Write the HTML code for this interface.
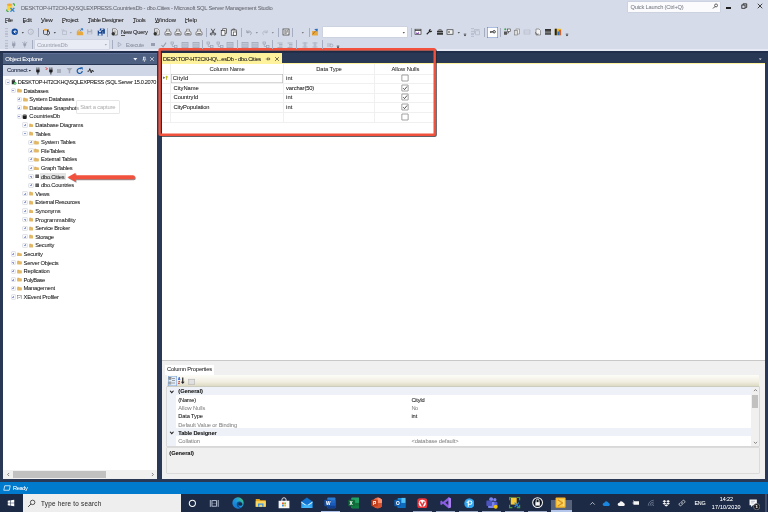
<!DOCTYPE html>
<html lang="en"><head><meta charset="utf-8"><title>SSMS - dbo.Cities</title>
<style>
html,body{margin:0;padding:0}
body{width:768px;height:512px;overflow:hidden;position:relative;background:#d6dbe9;font-family:"Liberation Sans", sans-serif;}
body div,body svg,body span{position:absolute;display:block}
span{white-space:pre;line-height:1;text-shadow:0 0 0.5px color-mix(in srgb, currentColor 30%, transparent);}
#root{left:0;top:0;width:768px;height:512px;will-change:transform}
</style></head>
<body>
<div id="root">
<svg style="left:5.75px;top:2.95px;width:9.5px;height:9.5px;" viewBox="0 0 16 16"><path d="M1.500 3v7.500c0 1.300 2 2 4.500 2s4.500-0.700 4.500-2V3z" fill="#fbd53a"/><ellipse cx="6" cy="3" rx="4.500" ry="2" fill="#f3a93a"/><path d="M11.500 1.200a4 4 0 0 1 3.500 3.800" stroke="#4fae46" stroke-width="2.200" fill="none"/><path d="M1 11a4 4 0 0 0 3.500 3.800" stroke="#4fae46" stroke-width="2.200" fill="none"/><path d="M7.500 8.500l6.500 6M14 8.500l-6.500 6" stroke="#2f86d6" stroke-width="2.200"/></svg>
<span id="t0" style="top:6.00px;font-size:5.8px;color:#6d7079;letter-spacing:-0.270px;left:20.90px;">DESKTOP-HT2CKHQ\SQLEXPRESS.CountriesDb - dbo.Cities - Microsoft SQL Server Management Studio</span>
<div style="left:628.10px;top:1.90px;width:91.50px;height:9.70px;background:#fbfbfd;box-shadow:0 0 0 0.5px #c3c9d8;"></div>
<span id="t1" style="top:5.00px;font-size:5.7px;color:#80848e;letter-spacing:-0.179px;left:630.50px;">Quick Launch (Ctrl+Q)</span>
<svg style="left:711.75px;top:3.45px;width:6.5px;height:6.5px;" viewBox="0 0 16 16"><circle cx="10" cy="6" r="3.6" fill="none" stroke="#333" stroke-width="1.8"/><path d="M7.5 8.5L2.5 13.5" stroke="#333" stroke-width="2.2"/></svg>
<div style="left:726.20px;top:7.20px;width:4.40px;height:1.40px;background:#1e1e1e;"></div>
<svg style="left:741.45px;top:3.05px;width:6.5px;height:6.5px;" viewBox="0 0 16 16"><rect x="2" y="5" width="8" height="8" fill="none" stroke="#1e1e1e" stroke-width="2"/><path d="M5 5V2h9v9h-3" fill="none" stroke="#1e1e1e" stroke-width="2"/></svg>
<svg style="left:757.30px;top:3.30px;width:6px;height:6px;" viewBox="0 0 16 16"><path d="M2 2l12 12M14 2L2 14" stroke="#1e1e1e" stroke-width="2.2"/></svg>
<span id="t2" style="top:18.00px;font-size:5.9px;color:#262626;letter-spacing:-0.475px;left:5.00px;">File</span>
<div style="left:5.20px;top:22.25px;width:2.30px;height:0.50px;background:#555;"></div>
<span id="t3" style="top:18.00px;font-size:5.9px;color:#262626;letter-spacing:-0.289px;left:22.50px;">Edit</span>
<div style="left:22.70px;top:22.25px;width:2.30px;height:0.50px;background:#555;"></div>
<span id="t4" style="top:18.00px;font-size:5.9px;color:#262626;letter-spacing:-0.293px;left:41.00px;">View</span>
<div style="left:41.20px;top:22.25px;width:2.30px;height:0.50px;background:#555;"></div>
<span id="t5" style="top:18.00px;font-size:5.9px;color:#262626;letter-spacing:-0.263px;left:62.00px;">Project</span>
<div style="left:62.20px;top:22.25px;width:2.30px;height:0.50px;background:#555;"></div>
<span id="t6" style="top:18.00px;font-size:5.9px;color:#262626;letter-spacing:-0.271px;left:88.00px;">Table Designer</span>
<div style="left:88.20px;top:22.25px;width:2.30px;height:0.50px;background:#555;"></div>
<span id="t7" style="top:18.00px;font-size:5.9px;color:#262626;letter-spacing:-0.253px;left:133.00px;">Tools</span>
<div style="left:133.20px;top:22.25px;width:2.30px;height:0.50px;background:#555;"></div>
<span id="t8" style="top:18.00px;font-size:5.9px;color:#262626;letter-spacing:0.008px;left:155.00px;">Window</span>
<div style="left:155.20px;top:22.25px;width:4.20px;height:0.50px;background:#555;"></div>
<span id="t9" style="top:18.00px;font-size:5.9px;color:#262626;letter-spacing:-0.031px;left:185.00px;">Help</span>
<div style="left:185.20px;top:22.25px;width:2.30px;height:0.50px;background:#555;"></div>
<div style="left:0.00px;top:48.60px;width:768.00px;height:2.20px;background:#e6e9f4;"></div>
<div style="left:0.00px;top:50.70px;width:768.00px;height:432.00px;background:#293955;"></div>
<div style="left:0.00px;top:50.70px;width:768.00px;height:2.20px;background:#222f4c;"></div>
<div style="left:3.30px;top:52.90px;width:154.10px;height:11.60px;background:#4d6082;"></div>
<div style="left:3.30px;top:52.90px;width:154.10px;height:1.30px;background:#5f7098;"></div>
<div style="left:3.30px;top:64.50px;width:154.10px;height:11.50px;background:#cfd6e5;"></div>
<div style="left:3.30px;top:76.00px;width:154.10px;height:403.00px;background:#ffffff;"></div>
<div style="left:161.70px;top:62.80px;width:603.40px;height:1.40px;background:#fff29d;"></div>
<div style="left:161.70px;top:64.20px;width:603.40px;height:296.00px;background:#ffffff;"></div>
<div style="left:161.70px;top:360.20px;width:603.40px;height:118.80px;background:#f0f0f0;"></div>
<div style="left:161.70px;top:360.00px;width:603.40px;height:0.60px;background:#c8c8c8;"></div>
<div style="left:161.70px;top:53.10px;width:120.30px;height:10.00px;background:#fff29d;"></div>
<div style="left:0.00px;top:481.80px;width:768.00px;height:12.20px;background:#007acc;"></div>
<div style="left:0.00px;top:493.80px;width:768.00px;height:18.20px;background:#1c2a45;"></div>
<span id="t10" style="top:57.00px;font-size:5.9px;color:#ffffff;letter-spacing:-0.221px;left:5.20px;">Object Explorer</span>
<svg style="left:132.00px;top:56.00px;width:6.6px;height:6.6px;" viewBox="0 0 16 16"><path d="M3 5h10L8 11z" fill="#eef1f8"/></svg>
<svg style="left:140.55px;top:55.95px;width:6.5px;height:6.5px;" viewBox="0 0 16 16"><path d="M5 2h6v7h2v1.5H8.8V15H7.2v-4.5H3V9h2z M7 3.5v5.5h2V3.5z" fill="#e8ecf5" fill-rule="evenodd"/></svg>
<svg style="left:149.00px;top:56.30px;width:6px;height:6px;" viewBox="0 0 16 16"><path d="M3 3l10 10M13 3L3 13" stroke="#e8ecf5" stroke-width="1.8"/></svg>
<span id="t11" style="top:68.00px;font-size:5.9px;color:#1e2a44;letter-spacing:-0.208px;left:7.00px;">Connect</span>
<svg style="left:27.70px;top:69.00px;width:3.6px;height:3.6px;" viewBox="0 0 16 16"><path d="M3 5h10L8 11z" fill="#1e1e1e"/></svg>
<svg style="left:34.40px;top:67.00px;width:7.8px;height:7.8px;" viewBox="0 0 16 16"><path d="M6 1v4.500M10 1v4.500" stroke="#1e1e1e" stroke-width="1.500"/><path d="M4.500 5h7v4c0 1.500-1.300 2.300-2.600 2.500V15.500H7.100v-4C5.800 11.300 4.500 10.500 4.500 9z" fill="#1e1e1e"/></svg>
<svg style="left:46.70px;top:67.00px;width:7.8px;height:7.8px;" viewBox="0 0 16 16"><path d="M6 1v4.500M10 1v4.500" stroke="#1e1e1e" stroke-width="1.500"/><path d="M4.500 5h7v4c0 1.500-1.300 2.300-2.600 2.500V15.500H7.100v-4C5.800 11.300 4.500 10.500 4.500 9z" fill="#1e1e1e"/></svg>
<svg style="left:44.60px;top:66.90px;width:3.4px;height:3.4px;" viewBox="0 0 16 16"><path d="M2 2l10 6-10 6" fill="none" stroke="#d8261c" stroke-width="3.200"/></svg>
<div style="left:57.40px;top:68.90px;width:3.70px;height:3.70px;background:#a9aebb;"></div>
<svg style="left:66.20px;top:67.40px;width:7px;height:7px;" viewBox="0 0 16 16"><path d="M1.500 2h13L9.600 8.500V14H6.400V8.500z" fill="#a4a9b6"/></svg>
<svg style="left:76.30px;top:67.20px;width:7.4px;height:7.4px;" viewBox="0 0 16 16"><path d="M13.500 8.500a5.500 5.500 0 1 1-2.500-4.600" fill="none" stroke="#1559a8" stroke-width="2.600"/><path d="M8.500 0.500h6v6z" fill="#1559a8"/></svg>
<svg style="left:86.95px;top:66.95px;width:7.5px;height:7.5px;" viewBox="0 0 16 16"><path d="M1 9h3l2-5.500 3 9 2-6 1 2.500h3" fill="none" stroke="#1e1e1e" stroke-width="1.900"/></svg>
<div style="left:5.95px;top:80.35px;width:3.30px;height:3.30px;background:#f7f8fb;box-shadow:0 0 0 0.45px #c3c5cd;"></div>
<div style="left:6.55px;top:81.75px;width:2.10px;height:0.50px;background:#93a0cf;"></div>
<svg style="left:10.50px;top:79.00px;width:6px;height:6px;" viewBox="0 0 16 16"><rect x="2" y="3" width="9" height="11" fill="#333"/><rect x="4" y="1" width="6" height="4" fill="#666"/><circle cx="11" cy="11.500" r="3.600" fill="#36b04a"/><path d="M9.800 10l3 1.500-3 1.500z" fill="#fff"/></svg>
<span id="t12" style="top:80.00px;font-size:5.6px;color:#262626;letter-spacing:-0.312px;left:17.70px;width:139.8px;overflow:hidden;">DESKTOP-HT2CKHQ\SQLEXPRESS (SQL Server 15.0.2070</span>
<div style="left:11.78px;top:88.95px;width:3.30px;height:3.30px;background:#f7f8fb;box-shadow:0 0 0 0.45px #c3c5cd;"></div>
<div style="left:12.38px;top:90.35px;width:2.10px;height:0.50px;background:#93a0cf;"></div>
<svg style="left:16.88px;top:88.15px;width:4.9px;height:4.9px;" viewBox="0 0 16 16"><path d="M1 2.500h6l1.500 2H15v9.500H1z" fill="#dcad58"/><path d="M1 5.500h14v8.500H1z" fill="#e2b765"/></svg>
<span id="t13" style="top:89.00px;font-size:5.8px;color:#262626;letter-spacing:-0.324px;left:23.53px;">Databases</span>
<div style="left:17.61px;top:97.55px;width:3.30px;height:3.30px;background:#f7f8fb;box-shadow:0 0 0 0.45px #c3c5cd;"></div>
<div style="left:18.21px;top:98.95px;width:2.10px;height:0.50px;background:#93a0cf;"></div>
<div style="left:19.01px;top:98.15px;width:0.50px;height:2.10px;background:#93a0cf;"></div>
<svg style="left:22.71px;top:96.75px;width:4.9px;height:4.9px;" viewBox="0 0 16 16"><path d="M1 2.500h6l1.500 2H15v9.500H1z" fill="#dcad58"/><path d="M1 5.500h14v8.500H1z" fill="#e2b765"/></svg>
<span id="t14" style="top:97.00px;font-size:5.8px;color:#262626;letter-spacing:-0.244px;left:29.36px;">System Databases</span>
<div style="left:17.61px;top:106.15px;width:3.30px;height:3.30px;background:#f7f8fb;box-shadow:0 0 0 0.45px #c3c5cd;"></div>
<div style="left:18.21px;top:107.55px;width:2.10px;height:0.50px;background:#93a0cf;"></div>
<div style="left:19.01px;top:106.75px;width:0.50px;height:2.10px;background:#93a0cf;"></div>
<svg style="left:22.71px;top:105.35px;width:4.9px;height:4.9px;" viewBox="0 0 16 16"><path d="M1 2.500h6l1.500 2H15v9.500H1z" fill="#dcad58"/><path d="M1 5.500h14v8.500H1z" fill="#e2b765"/></svg>
<span id="t15" style="top:106.00px;font-size:5.8px;color:#262626;letter-spacing:-0.240px;left:29.36px;">Database Snapshots</span>
<div style="left:17.61px;top:114.75px;width:3.30px;height:3.30px;background:#f7f8fb;box-shadow:0 0 0 0.45px #c3c5cd;"></div>
<div style="left:18.21px;top:116.15px;width:2.10px;height:0.50px;background:#93a0cf;"></div>
<svg style="left:22.46px;top:113.70px;width:5.4px;height:5.4px;" viewBox="0 0 16 16"><path d="M2 3.500v9c0 1.500 2.500 2.500 6 2.500s6-1 6-2.500v-9z" fill="#1e1e1e"/><ellipse cx="8" cy="3.500" rx="6" ry="2.400" fill="#6a6a6a"/></svg>
<span id="t16" style="top:114.00px;font-size:5.8px;color:#262626;letter-spacing:-0.130px;left:29.36px;">CountriesDb</span>
<div style="left:23.44px;top:123.35px;width:3.30px;height:3.30px;background:#f7f8fb;box-shadow:0 0 0 0.45px #c3c5cd;"></div>
<div style="left:24.04px;top:124.75px;width:2.10px;height:0.50px;background:#93a0cf;"></div>
<div style="left:24.84px;top:123.95px;width:0.50px;height:2.10px;background:#93a0cf;"></div>
<svg style="left:28.54px;top:122.55px;width:4.9px;height:4.9px;" viewBox="0 0 16 16"><path d="M1 2.500h6l1.500 2H15v9.500H1z" fill="#dcad58"/><path d="M1 5.500h14v8.500H1z" fill="#e2b765"/></svg>
<span id="t17" style="top:123.00px;font-size:5.8px;color:#262626;letter-spacing:-0.196px;left:35.19px;">Database Diagrams</span>
<div style="left:23.44px;top:131.95px;width:3.30px;height:3.30px;background:#f7f8fb;box-shadow:0 0 0 0.45px #c3c5cd;"></div>
<div style="left:24.04px;top:133.35px;width:2.10px;height:0.50px;background:#93a0cf;"></div>
<svg style="left:28.54px;top:131.15px;width:4.9px;height:4.9px;" viewBox="0 0 16 16"><path d="M1 2.500h6l1.500 2H15v9.500H1z" fill="#dcad58"/><path d="M1 5.500h14v8.500H1z" fill="#e2b765"/></svg>
<span id="t18" style="top:132.00px;font-size:5.8px;color:#262626;letter-spacing:-0.240px;left:35.19px;">Tables</span>
<div style="left:29.27px;top:140.55px;width:3.30px;height:3.30px;background:#f7f8fb;box-shadow:0 0 0 0.45px #c3c5cd;"></div>
<div style="left:29.87px;top:141.95px;width:2.10px;height:0.50px;background:#93a0cf;"></div>
<div style="left:30.67px;top:141.15px;width:0.50px;height:2.10px;background:#93a0cf;"></div>
<svg style="left:34.37px;top:139.75px;width:4.9px;height:4.9px;" viewBox="0 0 16 16"><path d="M1 2.500h6l1.500 2H15v9.500H1z" fill="#dcad58"/><path d="M1 5.500h14v8.500H1z" fill="#e2b765"/></svg>
<span id="t19" style="top:140.00px;font-size:5.8px;color:#262626;letter-spacing:-0.240px;left:41.02px;">System Tables</span>
<div style="left:29.27px;top:149.15px;width:3.30px;height:3.30px;background:#f7f8fb;box-shadow:0 0 0 0.45px #c3c5cd;"></div>
<div style="left:29.87px;top:150.55px;width:2.10px;height:0.50px;background:#93a0cf;"></div>
<div style="left:30.67px;top:149.75px;width:0.50px;height:2.10px;background:#93a0cf;"></div>
<svg style="left:34.37px;top:148.35px;width:4.9px;height:4.9px;" viewBox="0 0 16 16"><path d="M1 2.500h6l1.500 2H15v9.500H1z" fill="#dcad58"/><path d="M1 5.500h14v8.500H1z" fill="#e2b765"/></svg>
<span id="t20" style="top:149.00px;font-size:5.8px;color:#262626;letter-spacing:-0.240px;left:41.02px;">FileTables</span>
<div style="left:29.27px;top:157.75px;width:3.30px;height:3.30px;background:#f7f8fb;box-shadow:0 0 0 0.45px #c3c5cd;"></div>
<div style="left:29.87px;top:159.15px;width:2.10px;height:0.50px;background:#93a0cf;"></div>
<div style="left:30.67px;top:158.35px;width:0.50px;height:2.10px;background:#93a0cf;"></div>
<svg style="left:34.37px;top:156.95px;width:4.9px;height:4.9px;" viewBox="0 0 16 16"><path d="M1 2.500h6l1.500 2H15v9.500H1z" fill="#dcad58"/><path d="M1 5.500h14v8.500H1z" fill="#e2b765"/></svg>
<span id="t21" style="top:157.00px;font-size:5.8px;color:#262626;letter-spacing:-0.240px;left:41.02px;">External Tables</span>
<div style="left:29.27px;top:166.35px;width:3.30px;height:3.30px;background:#f7f8fb;box-shadow:0 0 0 0.45px #c3c5cd;"></div>
<div style="left:29.87px;top:167.75px;width:2.10px;height:0.50px;background:#93a0cf;"></div>
<div style="left:30.67px;top:166.95px;width:0.50px;height:2.10px;background:#93a0cf;"></div>
<svg style="left:34.37px;top:165.55px;width:4.9px;height:4.9px;" viewBox="0 0 16 16"><path d="M1 2.500h6l1.500 2H15v9.500H1z" fill="#dcad58"/><path d="M1 5.500h14v8.500H1z" fill="#e2b765"/></svg>
<span id="t22" style="top:166.00px;font-size:5.8px;color:#262626;letter-spacing:-0.240px;left:41.02px;">Graph Tables</span>
<div style="left:40.22px;top:173.20px;width:25.40px;height:6.90px;background:#e4e4e4;"></div>
<div style="left:29.27px;top:174.95px;width:3.30px;height:3.30px;background:#f7f8fb;box-shadow:0 0 0 0.45px #c3c5cd;"></div>
<div style="left:29.87px;top:176.35px;width:2.10px;height:0.50px;background:#93a0cf;"></div>
<div style="left:30.67px;top:175.55px;width:0.50px;height:2.10px;background:#93a0cf;"></div>
<svg style="left:35.22px;top:174.30px;width:4.4px;height:4.4px;" viewBox="0 0 16 16"><rect x="1.500" y="2" width="13" height="12.500" fill="#3c3c3c"/><path d="M1.500 6.300h13M1.500 10.300h13" stroke="#d0d0d0" stroke-width="1.100"/><path d="M6 6v8.500M10.500 6v8.500" stroke="#999" stroke-width="0.700"/></svg>
<span id="t23" style="top:175.00px;font-size:5.8px;color:#262626;letter-spacing:-0.240px;left:41.02px;">dbo.Cities</span>
<div style="left:29.27px;top:183.55px;width:3.30px;height:3.30px;background:#f7f8fb;box-shadow:0 0 0 0.45px #c3c5cd;"></div>
<div style="left:29.87px;top:184.95px;width:2.10px;height:0.50px;background:#93a0cf;"></div>
<div style="left:30.67px;top:184.15px;width:0.50px;height:2.10px;background:#93a0cf;"></div>
<svg style="left:35.22px;top:182.90px;width:4.4px;height:4.4px;" viewBox="0 0 16 16"><rect x="1.500" y="2" width="13" height="12.500" fill="#3c3c3c"/><path d="M1.500 6.300h13M1.500 10.300h13" stroke="#d0d0d0" stroke-width="1.100"/><path d="M6 6v8.500M10.500 6v8.500" stroke="#999" stroke-width="0.700"/></svg>
<span id="t24" style="top:183.00px;font-size:5.8px;color:#262626;letter-spacing:-0.240px;left:41.02px;">dbo.Countries</span>
<div style="left:23.44px;top:192.15px;width:3.30px;height:3.30px;background:#f7f8fb;box-shadow:0 0 0 0.45px #c3c5cd;"></div>
<div style="left:24.04px;top:193.55px;width:2.10px;height:0.50px;background:#93a0cf;"></div>
<div style="left:24.84px;top:192.75px;width:0.50px;height:2.10px;background:#93a0cf;"></div>
<svg style="left:28.54px;top:191.35px;width:4.9px;height:4.9px;" viewBox="0 0 16 16"><path d="M1 2.500h6l1.500 2H15v9.500H1z" fill="#dcad58"/><path d="M1 5.500h14v8.500H1z" fill="#e2b765"/></svg>
<span id="t25" style="top:192.00px;font-size:5.8px;color:#262626;letter-spacing:-0.240px;left:35.19px;">Views</span>
<div style="left:23.44px;top:200.75px;width:3.30px;height:3.30px;background:#f7f8fb;box-shadow:0 0 0 0.45px #c3c5cd;"></div>
<div style="left:24.04px;top:202.15px;width:2.10px;height:0.50px;background:#93a0cf;"></div>
<div style="left:24.84px;top:201.35px;width:0.50px;height:2.10px;background:#93a0cf;"></div>
<svg style="left:28.54px;top:199.95px;width:4.9px;height:4.9px;" viewBox="0 0 16 16"><path d="M1 2.500h6l1.500 2H15v9.500H1z" fill="#dcad58"/><path d="M1 5.500h14v8.500H1z" fill="#e2b765"/></svg>
<span id="t26" style="top:200.00px;font-size:5.8px;color:#262626;letter-spacing:-0.333px;left:35.19px;">External Resources</span>
<div style="left:23.44px;top:209.35px;width:3.30px;height:3.30px;background:#f7f8fb;box-shadow:0 0 0 0.45px #c3c5cd;"></div>
<div style="left:24.04px;top:210.75px;width:2.10px;height:0.50px;background:#93a0cf;"></div>
<div style="left:24.84px;top:209.95px;width:0.50px;height:2.10px;background:#93a0cf;"></div>
<svg style="left:28.54px;top:208.55px;width:4.9px;height:4.9px;" viewBox="0 0 16 16"><path d="M1 2.500h6l1.500 2H15v9.500H1z" fill="#dcad58"/><path d="M1 5.500h14v8.500H1z" fill="#e2b765"/></svg>
<span id="t27" style="top:209.00px;font-size:5.8px;color:#262626;letter-spacing:-0.240px;left:35.19px;">Synonyms</span>
<div style="left:23.44px;top:217.95px;width:3.30px;height:3.30px;background:#f7f8fb;box-shadow:0 0 0 0.45px #c3c5cd;"></div>
<div style="left:24.04px;top:219.35px;width:2.10px;height:0.50px;background:#93a0cf;"></div>
<div style="left:24.84px;top:218.55px;width:0.50px;height:2.10px;background:#93a0cf;"></div>
<svg style="left:28.54px;top:217.15px;width:4.9px;height:4.9px;" viewBox="0 0 16 16"><path d="M1 2.500h6l1.500 2H15v9.500H1z" fill="#dcad58"/><path d="M1 5.500h14v8.500H1z" fill="#e2b765"/></svg>
<span id="t28" style="top:218.00px;font-size:5.8px;color:#262626;letter-spacing:-0.093px;left:35.19px;">Programmability</span>
<div style="left:23.44px;top:226.55px;width:3.30px;height:3.30px;background:#f7f8fb;box-shadow:0 0 0 0.45px #c3c5cd;"></div>
<div style="left:24.04px;top:227.95px;width:2.10px;height:0.50px;background:#93a0cf;"></div>
<div style="left:24.84px;top:227.15px;width:0.50px;height:2.10px;background:#93a0cf;"></div>
<svg style="left:28.54px;top:225.75px;width:4.9px;height:4.9px;" viewBox="0 0 16 16"><path d="M1 2.500h6l1.500 2H15v9.500H1z" fill="#dcad58"/><path d="M1 5.500h14v8.500H1z" fill="#e2b765"/></svg>
<span id="t29" style="top:226.00px;font-size:5.8px;color:#262626;letter-spacing:-0.240px;left:35.19px;">Service Broker</span>
<div style="left:23.44px;top:235.15px;width:3.30px;height:3.30px;background:#f7f8fb;box-shadow:0 0 0 0.45px #c3c5cd;"></div>
<div style="left:24.04px;top:236.55px;width:2.10px;height:0.50px;background:#93a0cf;"></div>
<div style="left:24.84px;top:235.75px;width:0.50px;height:2.10px;background:#93a0cf;"></div>
<svg style="left:28.54px;top:234.35px;width:4.9px;height:4.9px;" viewBox="0 0 16 16"><path d="M1 2.500h6l1.500 2H15v9.500H1z" fill="#dcad58"/><path d="M1 5.500h14v8.500H1z" fill="#e2b765"/></svg>
<span id="t30" style="top:235.00px;font-size:5.8px;color:#262626;letter-spacing:-0.240px;left:35.19px;">Storage</span>
<div style="left:23.44px;top:243.75px;width:3.30px;height:3.30px;background:#f7f8fb;box-shadow:0 0 0 0.45px #c3c5cd;"></div>
<div style="left:24.04px;top:245.15px;width:2.10px;height:0.50px;background:#93a0cf;"></div>
<div style="left:24.84px;top:244.35px;width:0.50px;height:2.10px;background:#93a0cf;"></div>
<svg style="left:28.54px;top:242.95px;width:4.9px;height:4.9px;" viewBox="0 0 16 16"><path d="M1 2.500h6l1.500 2H15v9.500H1z" fill="#dcad58"/><path d="M1 5.500h14v8.500H1z" fill="#e2b765"/></svg>
<span id="t31" style="top:243.00px;font-size:5.8px;color:#262626;letter-spacing:-0.240px;left:35.19px;">Security</span>
<div style="left:11.78px;top:252.35px;width:3.30px;height:3.30px;background:#f7f8fb;box-shadow:0 0 0 0.45px #c3c5cd;"></div>
<div style="left:12.38px;top:253.75px;width:2.10px;height:0.50px;background:#93a0cf;"></div>
<div style="left:13.18px;top:252.95px;width:0.50px;height:2.10px;background:#93a0cf;"></div>
<svg style="left:16.88px;top:251.55px;width:4.9px;height:4.9px;" viewBox="0 0 16 16"><path d="M1 2.500h6l1.500 2H15v9.500H1z" fill="#dcad58"/><path d="M1 5.500h14v8.500H1z" fill="#e2b765"/></svg>
<span id="t32" style="top:252.00px;font-size:5.8px;color:#262626;letter-spacing:-0.240px;left:23.53px;">Security</span>
<div style="left:11.78px;top:260.95px;width:3.30px;height:3.30px;background:#f7f8fb;box-shadow:0 0 0 0.45px #c3c5cd;"></div>
<div style="left:12.38px;top:262.35px;width:2.10px;height:0.50px;background:#93a0cf;"></div>
<div style="left:13.18px;top:261.55px;width:0.50px;height:2.10px;background:#93a0cf;"></div>
<svg style="left:16.88px;top:260.15px;width:4.9px;height:4.9px;" viewBox="0 0 16 16"><path d="M1 2.500h6l1.500 2H15v9.500H1z" fill="#dcad58"/><path d="M1 5.500h14v8.500H1z" fill="#e2b765"/></svg>
<span id="t33" style="top:261.00px;font-size:5.8px;color:#262626;letter-spacing:-0.240px;left:23.53px;">Server Objects</span>
<div style="left:11.78px;top:269.55px;width:3.30px;height:3.30px;background:#f7f8fb;box-shadow:0 0 0 0.45px #c3c5cd;"></div>
<div style="left:12.38px;top:270.95px;width:2.10px;height:0.50px;background:#93a0cf;"></div>
<div style="left:13.18px;top:270.15px;width:0.50px;height:2.10px;background:#93a0cf;"></div>
<svg style="left:16.88px;top:268.75px;width:4.9px;height:4.9px;" viewBox="0 0 16 16"><path d="M1 2.500h6l1.500 2H15v9.500H1z" fill="#dcad58"/><path d="M1 5.500h14v8.500H1z" fill="#e2b765"/></svg>
<span id="t34" style="top:269.00px;font-size:5.8px;color:#262626;letter-spacing:-0.240px;left:23.53px;">Replication</span>
<div style="left:11.78px;top:278.15px;width:3.30px;height:3.30px;background:#f7f8fb;box-shadow:0 0 0 0.45px #c3c5cd;"></div>
<div style="left:12.38px;top:279.55px;width:2.10px;height:0.50px;background:#93a0cf;"></div>
<div style="left:13.18px;top:278.75px;width:0.50px;height:2.10px;background:#93a0cf;"></div>
<svg style="left:16.88px;top:277.35px;width:4.9px;height:4.9px;" viewBox="0 0 16 16"><path d="M1 2.500h6l1.500 2H15v9.500H1z" fill="#dcad58"/><path d="M1 5.500h14v8.500H1z" fill="#e2b765"/></svg>
<span id="t35" style="top:278.00px;font-size:5.8px;color:#262626;letter-spacing:-0.388px;left:23.53px;">PolyBase</span>
<div style="left:11.78px;top:286.75px;width:3.30px;height:3.30px;background:#f7f8fb;box-shadow:0 0 0 0.45px #c3c5cd;"></div>
<div style="left:12.38px;top:288.15px;width:2.10px;height:0.50px;background:#93a0cf;"></div>
<div style="left:13.18px;top:287.35px;width:0.50px;height:2.10px;background:#93a0cf;"></div>
<svg style="left:16.88px;top:285.95px;width:4.9px;height:4.9px;" viewBox="0 0 16 16"><path d="M1 2.500h6l1.500 2H15v9.500H1z" fill="#dcad58"/><path d="M1 5.500h14v8.500H1z" fill="#e2b765"/></svg>
<span id="t36" style="top:286.00px;font-size:5.8px;color:#262626;letter-spacing:-0.240px;left:23.53px;">Management</span>
<div style="left:11.78px;top:295.35px;width:3.30px;height:3.30px;background:#f7f8fb;box-shadow:0 0 0 0.45px #c3c5cd;"></div>
<div style="left:12.38px;top:296.75px;width:2.10px;height:0.50px;background:#93a0cf;"></div>
<div style="left:13.18px;top:295.95px;width:0.50px;height:2.10px;background:#93a0cf;"></div>
<svg style="left:16.93px;top:294.60px;width:4.8px;height:4.8px;" viewBox="0 0 16 16"><rect x="2" y="2" width="12" height="12" fill="#fff" stroke="#555" stroke-width="1.4"/><path d="M4 11l3-4 2 2 3-4" stroke="#444" stroke-width="1.3" fill="none"/></svg>
<span id="t37" style="top:295.00px;font-size:5.8px;color:#262626;letter-spacing:-0.240px;left:23.53px;">XEvent Profiler</span>
<div style="left:77.00px;top:101.00px;width:41.70px;height:11.50px;background:rgba(255,255,255,0.6);box-shadow:0 0 0 0.5px #cdcdcd;"></div>
<span id="t38" style="top:105.00px;font-size:5.8px;color:#b5b5b5;letter-spacing:-0.202px;left:80.20px;">Start a capture</span>
<div style="left:3.30px;top:470.30px;width:154.10px;height:8.70px;background:#f0f0f0;"></div>
<div style="left:12.50px;top:471.30px;width:93.50px;height:6.60px;background:#c1c1c1;"></div>
<svg style="left:5.50px;top:472.00px;width:5px;height:5px;" viewBox="0 0 16 16"><path d="M10 3L5 8l5 5" fill="none" stroke="#444" stroke-width="2"/></svg>
<svg style="left:150.00px;top:472.00px;width:5px;height:5px;" viewBox="0 0 16 16"><path d="M6 3l5 5-5 5" fill="none" stroke="#444" stroke-width="2"/></svg>
<span id="t39" style="top:57.00px;font-size:5.8px;color:#1e1e1e;letter-spacing:-0.282px;left:163.00px;">DESKTOP-HT2CKHQ\...esDb - dbo.Cities</span>
<svg style="left:264.50px;top:55.80px;width:6px;height:6px;" viewBox="0 0 16 16"><path d="M2 8h5M7 4.500v7M7 5.500h5v4.500H7M12 8h2" fill="none" stroke="#333" stroke-width="1.5"/></svg>
<svg style="left:273.70px;top:55.70px;width:6px;height:6px;" viewBox="0 0 16 16"><path d="M3 3l10 10M13 3L3 13" stroke="#222" stroke-width="1.7"/></svg>
<svg style="left:757.55px;top:57.05px;width:4.5px;height:4.5px;" viewBox="0 0 16 16"><path d="M3 5h10L8 11z" fill="#dfe4ee"/></svg>
<div style="left:161.70px;top:73.50px;width:272.30px;height:0.60px;background:#f0f0f0;"></div>
<div style="left:161.70px;top:83.10px;width:272.30px;height:0.60px;background:#f0f0f0;"></div>
<div style="left:161.70px;top:92.70px;width:272.30px;height:0.60px;background:#f0f0f0;"></div>
<div style="left:161.70px;top:102.30px;width:272.30px;height:0.60px;background:#f0f0f0;"></div>
<div style="left:161.70px;top:111.90px;width:272.30px;height:0.60px;background:#f0f0f0;"></div>
<div style="left:161.70px;top:121.50px;width:272.30px;height:0.60px;background:#f0f0f0;"></div>
<div style="left:170.30px;top:64.20px;width:0.60px;height:57.60px;background:#f0f0f0;"></div>
<div style="left:283.20px;top:64.20px;width:0.60px;height:57.60px;background:#f0f0f0;"></div>
<div style="left:374.20px;top:64.20px;width:0.60px;height:57.60px;background:#f0f0f0;"></div>
<div style="left:433.70px;top:64.20px;width:0.60px;height:57.60px;background:#f0f0f0;"></div>
<span id="t40" style="top:67.00px;font-size:5.8px;color:#333;letter-spacing:-0.188px;left:127.05px;width:200px;text-align:center;">Column Name</span>
<span id="t41" style="top:67.00px;font-size:5.8px;color:#333;letter-spacing:-0.092px;left:229.00px;width:200px;text-align:center;">Data Type</span>
<span id="t42" style="top:67.00px;font-size:5.8px;color:#333;letter-spacing:-0.033px;left:305.40px;width:200px;text-align:center;">Allow Nulls</span>
<span id="t43" style="top:76.00px;font-size:5.8px;color:#222;letter-spacing:0.112px;left:172.80px;">CityId</span>
<span id="t44" style="top:76.00px;font-size:5.8px;color:#222;letter-spacing:0.058px;left:286.10px;">int</span>
<span id="t45" style="top:86.00px;font-size:5.8px;color:#222;letter-spacing:-0.019px;left:173.50px;">CityName</span>
<span id="t46" style="top:86.00px;font-size:5.8px;color:#222;letter-spacing:-0.149px;left:286.10px;">varchar(50)</span>
<span id="t47" style="top:95.00px;font-size:5.8px;color:#222;letter-spacing:-0.060px;left:173.50px;">CountryId</span>
<span id="t48" style="top:95.00px;font-size:5.8px;color:#222;letter-spacing:0.058px;left:286.10px;">int</span>
<span id="t49" style="top:105.00px;font-size:5.8px;color:#222;letter-spacing:-0.099px;left:173.50px;">CityPopulation</span>
<span id="t50" style="top:105.00px;font-size:5.8px;color:#222;letter-spacing:0.058px;left:286.10px;">int</span>
<div style="left:170.90px;top:73.50px;width:112.40px;height:9.20px;background:transparent;box-shadow:inset 0 0 0 0.6px #b4b4b4;"></div>
<svg style="left:162.60px;top:75.40px;width:5.6px;height:5.6px;" viewBox="0 0 16 16"><path d="M1 4.500l4.500 3.500-4.500 3.500z" fill="#222"/><circle cx="10.500" cy="5.500" r="3" fill="#bdbb10"/><rect x="9.300" y="7" width="2.400" height="7" fill="#a9a70e"/></svg>
<svg style="left:401.35px;top:74.20px;width:8px;height:8px;" viewBox="0 0 16 16"><rect x="1.700" y="2" width="12.600" height="12" rx="0.400" fill="#fff" stroke="#707070" stroke-width="1.300"/></svg>
<svg style="left:401.35px;top:83.80px;width:8px;height:8px;" viewBox="0 0 16 16"><rect x="1.700" y="2" width="12.600" height="12" rx="0.400" fill="#fff" stroke="#707070" stroke-width="1.300"/><path d="M4.300 8.400l2.700 2.800 5-6.200" fill="none" stroke="#2e2e2e" stroke-width="1.700"/></svg>
<svg style="left:401.35px;top:93.40px;width:8px;height:8px;" viewBox="0 0 16 16"><rect x="1.700" y="2" width="12.600" height="12" rx="0.400" fill="#fff" stroke="#707070" stroke-width="1.300"/><path d="M4.300 8.400l2.700 2.800 5-6.200" fill="none" stroke="#2e2e2e" stroke-width="1.700"/></svg>
<svg style="left:401.35px;top:103.00px;width:8px;height:8px;" viewBox="0 0 16 16"><rect x="1.700" y="2" width="12.600" height="12" rx="0.400" fill="#fff" stroke="#707070" stroke-width="1.300"/><path d="M4.300 8.400l2.700 2.800 5-6.200" fill="none" stroke="#2e2e2e" stroke-width="1.700"/></svg>
<svg style="left:401.35px;top:112.60px;width:8px;height:8px;" viewBox="0 0 16 16"><rect x="1.700" y="2" width="12.600" height="12" rx="0.400" fill="#fff" stroke="#707070" stroke-width="1.300"/></svg>
<div style="left:164.80px;top:364.60px;width:49.20px;height:10.00px;background:#ffffff;"></div>
<span id="t51" style="top:367.00px;font-size:5.8px;color:#333;letter-spacing:-0.177px;left:167.00px;">Column Properties</span>
<div style="left:166.60px;top:374.50px;width:592.40px;height:12.00px;background:linear-gradient(#fdfcf7,#f1efe2 55%,#d9d6bd);"></div>
<div style="left:167.60px;top:376.40px;width:9.00px;height:9.50px;background:#e3eefb;box-shadow:inset 0 0 0 0.6px #7da2ce;"></div>
<svg style="left:168.00px;top:377.00px;width:8px;height:8px;" viewBox="0 0 16 16"><rect x="2" y="1" width="4" height="4" fill="#fff" stroke="#444" stroke-width="1"/><path d="M3 3h2M4 2v2" stroke="#222" stroke-width="0.800"/><rect x="2" y="10" width="4" height="4" fill="#fff" stroke="#444" stroke-width="1"/><path d="M3 12h2" stroke="#222" stroke-width="0.800"/><path d="M8 3h6M8 7h6M8 12h6" stroke="#666" stroke-width="1.200"/></svg>
<span id="t52" style="top:378.00px;font-size:3.3px;color:#1f4fd0;letter-spacing:0.000px;font-weight:700;left:178.00px;">A</span>
<span id="t53" style="top:382.00px;font-size:3.3px;color:#c02020;letter-spacing:0.000px;font-weight:700;left:178.10px;">Z</span>
<svg style="left:179.45px;top:377.45px;width:7.5px;height:7.5px;" viewBox="0 0 16 16"><path d="M8 1v11" stroke="#222" stroke-width="2.600"/><path d="M4 10h8l-4 5z" fill="#222"/></svg>
<svg style="left:187.75px;top:377.55px;width:7.5px;height:7.5px;" viewBox="0 0 16 16"><rect x="1.500" y="2.500" width="13" height="11" fill="#d8d8d8" stroke="#aaa" stroke-width="1"/><path d="M3 5.500h10M3 8h10M3 10.500h10" stroke="#f2f2f2" stroke-width="1"/></svg>
<div style="left:166.60px;top:386.60px;width:592.40px;height:59.60px;background:#ffffff;box-shadow:0 0 0 0.5px #c0c0c0;"></div>
<div style="left:166.60px;top:386.60px;width:9.60px;height:59.60px;background:#eef1f8;"></div>
<div style="left:166.60px;top:386.60px;width:584.40px;height:8.28px;background:#eef1f8;"></div>
<div style="left:166.60px;top:428.00px;width:584.40px;height:8.28px;background:#eef1f8;"></div>
<span id="t54" style="top:389.00px;font-size:5.7px;color:#1e1e1e;letter-spacing:-0.054px;font-weight:700;left:178.30px;">(General)</span>
<svg style="left:169.00px;top:388.50px;width:5.6px;height:5.6px;" viewBox="0 0 16 16"><path d="M3 5L8 10.500 13 5" fill="none" stroke="#1e1e1e" stroke-width="3"/></svg>
<span id="t55" style="top:398.00px;font-size:5.7px;color:#222;letter-spacing:-0.211px;left:178.30px;">(Name)</span>
<span id="t56" style="top:398.00px;font-size:5.7px;color:#222;letter-spacing:-0.258px;left:411.50px;">CityId</span>
<span id="t57" style="top:406.00px;font-size:5.7px;color:#8c8c8c;letter-spacing:-0.075px;left:178.30px;">Allow Nulls</span>
<span id="t58" style="top:406.00px;font-size:5.7px;color:#8c8c8c;letter-spacing:-0.491px;left:411.50px;">No</span>
<span id="t59" style="top:414.00px;font-size:5.7px;color:#222;letter-spacing:-0.148px;left:178.30px;">Data Type</span>
<span id="t60" style="top:414.00px;font-size:5.7px;color:#222;letter-spacing:-0.139px;left:411.50px;">int</span>
<span id="t61" style="top:423.00px;font-size:5.7px;color:#8c8c8c;letter-spacing:-0.093px;left:178.30px;">Default Value or Binding</span>
<span id="t62" style="top:431.00px;font-size:5.7px;color:#1e1e1e;letter-spacing:-0.154px;font-weight:700;left:178.30px;">Table Designer</span>
<svg style="left:169.00px;top:429.90px;width:5.6px;height:5.6px;" viewBox="0 0 16 16"><path d="M3 5L8 10.500 13 5" fill="none" stroke="#1e1e1e" stroke-width="3"/></svg>
<span id="t63" style="top:439.00px;font-size:5.7px;color:#8c8c8c;letter-spacing:-0.049px;left:178.30px;">Collation</span>
<span id="t64" style="top:439.00px;font-size:5.7px;color:#8c8c8c;letter-spacing:-0.095px;left:411.50px;">&lt;database default&gt;</span>
<div style="left:751.00px;top:386.60px;width:8.00px;height:59.60px;background:#f0f0f0;"></div>
<div style="left:752.20px;top:395.30px;width:5.60px;height:12.40px;background:#c1c1c1;"></div>
<svg style="left:752.50px;top:387.90px;width:5px;height:5px;" viewBox="0 0 16 16"><path d="M3 10l5-5 5 5" fill="none" stroke="#444" stroke-width="2"/></svg>
<svg style="left:752.50px;top:440.10px;width:5px;height:5px;" viewBox="0 0 16 16"><path d="M3 6l5 5 5-5" fill="none" stroke="#444" stroke-width="2"/></svg>
<div style="left:166.60px;top:448.00px;width:592.40px;height:24.50px;background:#f0f0f0;box-shadow:0 0 0 0.5px #c6c6c6;"></div>
<span id="t65" style="top:451.00px;font-size:5.7px;color:#1e1e1e;letter-spacing:-0.054px;font-weight:700;left:169.30px;">(General)</span>
<svg style="left:2.80px;top:484.20px;width:8px;height:8px;" viewBox="0 0 16 16"><path d="M3.500 3.500h11l-2 9h-11z" fill="none" stroke="#fff" stroke-width="1.500"/></svg>
<span id="t66" style="top:486.00px;font-size:5.7px;color:#ffffff;letter-spacing:-0.391px;left:13.00px;">Ready</span>
<svg style="left:0;top:0;width:768px;height:512px;" viewBox="0 0 768 512"><rect x="160.600" y="50.200" width="275.100" height="85.500" rx="0.600" fill="none" stroke="#23262e" stroke-opacity="0.720" stroke-width="2.400"/><rect x="159.600" y="49.300" width="275.100" height="85.500" rx="0.600" fill="none" stroke="#f2523d" stroke-width="2.400"/></svg>
<svg style="left:0;top:0;width:768px;height:512px;" viewBox="0 0 768 512"><path d="M67.500 177.300L75.600 172.800v2.500h57.400a2 2 0 0 1 0 4H75.600v2.500z" fill="#2a1a1a" opacity="0.5" transform="translate(0.8,0.9)"/><path d="M67.500 177.300L75.600 172.800v2.500h57.400a2 2 0 0 1 0 4H75.600v2.500z" fill="#f2523d"/></svg>
<div style="left:5.4px;top:27.700000000000003px;width:2.4px;height:9px;background:repeating-linear-gradient(#b3bacb 0 0.8px,#d0d5e3 0.8px 1.6px);opacity:0.8"></div>
<svg style="left:11.25px;top:28.45px;width:7.5px;height:7.5px;" viewBox="0 0 16 16"><circle cx="8" cy="8" r="6.800" fill="#114a9c"/><path d="M9.500 4.500L6 8l3.500 3.500M6.300 8H12" fill="none" stroke="#fff" stroke-width="1.900"/></svg>
<svg style="left:21.20px;top:30.60px;width:3.6px;height:3.6px;" viewBox="0 0 16 16"><path d="M3 6h10L8 11z" fill="#1e1e1e"/></svg>
<svg style="left:27.25px;top:28.45px;width:7.5px;height:7.5px;" viewBox="0 0 16 16"><circle cx="8" cy="8" r="5.600" fill="none" stroke="#a7adba" stroke-width="1.700"/><path d="M7.500 5.500L10 8l-2.500 2.500" fill="none" stroke="#b6bbc7" stroke-width="1.400"/></svg>
<div style="left:37.70px;top:27.60px;width:0.60px;height:9.20px;background:#a6adc0;"></div>
<svg style="left:42.00px;top:28.20px;width:8px;height:8px;" viewBox="0 0 16 16"><ellipse cx="7" cy="3.500" rx="4" ry="2" fill="#e8a33a"/><path d="M3 4v7c0 1.300 2 2 4 2s4-0.700 4-2V4" fill="none" stroke="#333" stroke-width="1.500"/><path d="M10 6a4 4 0 1 1-1 7" fill="none" stroke="#222" stroke-width="1.700"/><path d="M11 2l2 2-2 2" fill="none" stroke="#222" stroke-width="1.300"/></svg>
<svg style="left:52.70px;top:30.60px;width:3.6px;height:3.6px;" viewBox="0 0 16 16"><path d="M3 6h10L8 11z" fill="#1e1e1e"/></svg>
<svg style="left:60.00px;top:28.20px;width:8px;height:8px;" viewBox="0 0 16 16"><path d="M3 4h5v2M5 6h8v7H5z" fill="none" stroke="#b0b6c4" stroke-width="1.400"/></svg>
<svg style="left:69.20px;top:30.60px;width:3.6px;height:3.6px;" viewBox="0 0 16 16"><path d="M3 6h10L8 11z" fill="#8d93a3"/></svg>
<svg style="left:75.75px;top:27.95px;width:8.5px;height:8.5px;" viewBox="0 0 16 16"><path d="M1.500 6h9l3 2.500v5h-12z" fill="#e7a93c"/><path d="M3 6l2-2.500h3.500" fill="none" stroke="#c98a22" stroke-width="1.200"/><path d="M9 1.500l3.500 0v3M12.500 1.500L8 5" fill="none" stroke="#2a6fc0" stroke-width="1.700"/></svg>
<svg style="left:86.25px;top:28.45px;width:7.5px;height:7.5px;" viewBox="0 0 16 16"><path d="M2.500 2.500h9l2 2v9h-11z" fill="#aab0be"/><rect x="5" y="2.500" width="5" height="3.500" fill="#dfe3ec"/><rect x="4.500" y="9" width="7" height="4.500" fill="#d0d5e0"/></svg>
<svg style="left:96.50px;top:28.00px;width:8.4px;height:8.4px;" viewBox="0 0 16 16"><path d="M5.500 1h8l1.500 1.500v8.500H5.500z" fill="#0f3f8c"/><rect x="8" y="1" width="4" height="2.600" fill="#d6dbe9"/><path d="M1 5h8.500l1.500 1.500v8.500H1z" fill="#0f3f8c" stroke="#d6dbe9" stroke-width="0.900"/><rect x="3.300" y="10.500" width="5.200" height="4" fill="#d6e2f5"/><rect x="3.800" y="5.500" width="3.600" height="2.400" fill="#d6e2f5"/></svg>
<div style="left:107.20px;top:27.60px;width:0.60px;height:9.20px;background:#a6adc0;"></div>
<svg style="left:111.00px;top:28.20px;width:8px;height:8px;" viewBox="0 0 16 16"><path d="M3 1.500h6.500l3 3v9.500H3z" fill="#f4f4f4" stroke="#444" stroke-width="1.200"/><path d="M5 6h5M5 8.300h5M5 10.600h4" stroke="#555" stroke-width="1"/><circle cx="4.500" cy="11.500" r="3.400" fill="#333"/></svg>
<span id="t67" style="top:30.00px;font-size:5.9px;color:#1e1e1e;letter-spacing:-0.330px;left:121.00px;">New Query</span>
<div style="left:121.20px;top:34.60px;width:3.60px;height:0.50px;background:#555;"></div>
<svg style="left:153.00px;top:28.20px;width:8px;height:8px;" viewBox="0 0 16 16"><path d="M3 1.500h6.500l3 3v9.500H3z" fill="#f4f4f4" stroke="#444" stroke-width="1.200"/><path d="M5 6h5M5 8.300h5M5 10.600h4" stroke="#555" stroke-width="1"/><circle cx="4.500" cy="11.500" r="3.400" fill="#333"/></svg>
<svg style="left:163.50px;top:28.20px;width:8px;height:8px;" viewBox="0 0 16 16"><path d="M2 8.500L8 3.500l6 5v5.500H2z" fill="#f2f2f2" stroke="#444" stroke-width="1.300"/><path d="M5 2.500h6v3.500H5z" fill="#fff" stroke="#444" stroke-width="1"/><path d="M4.500 11.500h7" stroke="#333" stroke-width="1.800"/></svg>
<svg style="left:174.00px;top:28.20px;width:8px;height:8px;" viewBox="0 0 16 16"><path d="M2 8.500L8 3.500l6 5v5.500H2z" fill="#f2f2f2" stroke="#444" stroke-width="1.300"/><path d="M5 2.500h6v3.500H5z" fill="#fff" stroke="#444" stroke-width="1"/><path d="M4.500 11.500h7" stroke="#333" stroke-width="1.800"/></svg>
<svg style="left:183.50px;top:28.20px;width:8px;height:8px;" viewBox="0 0 16 16"><path d="M2 8.500L8 3.500l6 5v5.500H2z" fill="#f2f2f2" stroke="#444" stroke-width="1.300"/><path d="M5 2.500h6v3.500H5z" fill="#fff" stroke="#444" stroke-width="1"/><path d="M4.500 11.500h7" stroke="#333" stroke-width="1.800"/></svg>
<svg style="left:195.00px;top:28.20px;width:8px;height:8px;" viewBox="0 0 16 16"><path d="M2 8.500L8 3.500l6 5v5.500H2z" fill="#f2f2f2" stroke="#444" stroke-width="1.300"/><path d="M5 2.500h6v3.500H5z" fill="#fff" stroke="#444" stroke-width="1"/><path d="M4.500 11.500h7" stroke="#333" stroke-width="1.800"/></svg>
<div style="left:206.20px;top:27.60px;width:0.60px;height:9.20px;background:#a6adc0;"></div>
<svg style="left:209.00px;top:28.20px;width:8px;height:8px;" viewBox="0 0 16 16"><path d="M4.500 1.500l5 9M11.500 1.500l-5 9" stroke="#222" stroke-width="1.500"/><circle cx="4.500" cy="12" r="2" fill="none" stroke="#222" stroke-width="1.400"/><circle cx="11.500" cy="12" r="2" fill="none" stroke="#222" stroke-width="1.400"/></svg>
<svg style="left:219.70px;top:28.20px;width:8px;height:8px;" viewBox="0 0 16 16"><rect x="5.500" y="1.500" width="7.500" height="9" fill="#f6f6f6" stroke="#333" stroke-width="1.300"/><rect x="2.500" y="5" width="7.500" height="9.500" fill="#f6f6f6" stroke="#333" stroke-width="1.300"/></svg>
<svg style="left:229.70px;top:28.20px;width:8px;height:8px;" viewBox="0 0 16 16"><rect x="2.500" y="4" width="10" height="10.500" fill="#f1f1f1" stroke="#333" stroke-width="1.300"/><path d="M5.500 4V2h4v2" fill="none" stroke="#333" stroke-width="1.300"/><rect x="7" y="8" width="5.500" height="6.500" fill="#fff" stroke="#333" stroke-width="1.100"/></svg>
<div style="left:241.20px;top:27.60px;width:0.60px;height:9.20px;background:#a6adc0;"></div>
<svg style="left:245.00px;top:28.20px;width:8px;height:8px;" viewBox="0 0 16 16"><path d="M4 9.500l-0.500-5M4 9.500l5-0.500M4 9c1.500-4 8-4 8.500 1.500 0 1.500-1 2.500-2 3.200" fill="none" stroke="#8d93a3" stroke-width="1.600"/></svg>
<svg style="left:255.20px;top:30.60px;width:3.6px;height:3.6px;" viewBox="0 0 16 16"><path d="M3 6h10L8 11z" fill="#6d7382"/></svg>
<svg style="left:261.00px;top:28.20px;width:8px;height:8px;" viewBox="0 0 16 16"><path d="M12 9.500l0.500-5M12 9.500l-5-0.500M12 9c-1.500-4-8-4-8.500 1.500 0 1.500 1 2.500 2 3.200" fill="none" stroke="#aab0be" stroke-width="1.500"/></svg>
<svg style="left:271.20px;top:30.60px;width:3.6px;height:3.6px;" viewBox="0 0 16 16"><path d="M3 6h10L8 11z" fill="#6d7382"/></svg>
<div style="left:277.70px;top:27.60px;width:0.60px;height:9.20px;background:#a6adc0;"></div>
<svg style="left:282.00px;top:28.20px;width:8px;height:8px;" viewBox="0 0 16 16"><rect x="2" y="2" width="12" height="12" fill="#f4f4f4" stroke="#333" stroke-width="1.400"/><path d="M4.500 5.500h4M4.500 8h7M4.500 10.500h5M10.500 4v3" stroke="#333" stroke-width="1.200"/></svg>
<div style="left:292.20px;top:27.60px;width:0.60px;height:9.20px;background:#a6adc0;"></div>
<svg style="left:301.20px;top:30.60px;width:3.6px;height:3.6px;" viewBox="0 0 16 16"><path d="M3 6h10L8 11z" fill="#555"/></svg>
<div style="left:308.70px;top:27.60px;width:0.60px;height:9.20px;background:#a6adc0;"></div>
<svg style="left:311.45px;top:27.95px;width:8.5px;height:8.5px;" viewBox="0 0 16 16"><path d="M2 5.500h8l3 2.500v6H2z" fill="#e7a93c"/><path d="M6 2l7-0.500-1 6z" fill="#2a6fc0"/><path d="M3 12l6-7" stroke="#b35a1a" stroke-width="1.500"/></svg>
<div style="left:322.50px;top:27.20px;width:84.50px;height:10.00px;background:#ffffff;box-shadow:0 0 0 0.5px #c4cad9;"></div>
<svg style="left:402.20px;top:30.60px;width:3.6px;height:3.6px;" viewBox="0 0 16 16"><path d="M3 6h10L8 11z" fill="#1e1e1e"/></svg>
<div style="left:410.70px;top:27.60px;width:0.60px;height:9.20px;background:#a6adc0;"></div>
<svg style="left:414.00px;top:28.20px;width:8px;height:8px;" viewBox="0 0 16 16"><rect x="2" y="2.500" width="12" height="10" fill="#fff" stroke="#333" stroke-width="1.400"/><path d="M2 5h12" stroke="#333" stroke-width="1.600"/><path d="M4.500 8.500l2.500 2 2.500-3.500v5h-5z" fill="#7a3fb0"/></svg>
<svg style="left:424.75px;top:27.95px;width:8.5px;height:8.5px;" viewBox="0 0 16 16"><path d="M13.500 4.500a3.500 3.500 0 0 1-5 3.300L4 12.500 2.500 11 7.200 6.500A3.500 3.500 0 0 1 11.500 2L9.500 4l1.500 1.500z" fill="#222"/></svg>
<svg style="left:435.50px;top:28.20px;width:8px;height:8px;" viewBox="0 0 16 16"><rect x="2" y="5.500" width="12" height="8" fill="#333"/><path d="M5.500 5.500v-2h5v2" fill="none" stroke="#333" stroke-width="1.400"/><path d="M2 9h12" stroke="#d6dbe9" stroke-width="1"/></svg>
<svg style="left:446.00px;top:28.20px;width:8px;height:8px;" viewBox="0 0 16 16"><rect x="2" y="3.500" width="12" height="9" fill="#f4f4f4" stroke="#333" stroke-width="1.400"/><path d="M4.500 6.500h3v3h-3z" fill="#555"/></svg>
<svg style="left:456.70px;top:30.60px;width:3.6px;height:3.6px;" viewBox="0 0 16 16"><path d="M3 6h10L8 11z" fill="#1e1e1e"/></svg>
<svg style="left:462.50px;top:33.20px;width:4px;height:4px;" viewBox="0 0 16 16"><path d="M3 3h10v1.600H3zM3 7h10L8 12.500z" fill="#1e1e1e"/></svg>
<div style="left:471.4px;top:27.700000000000003px;width:2.4px;height:9px;background:repeating-linear-gradient(#b3bacb 0 0.8px,#d0d5e3 0.8px 1.6px);opacity:0.8"></div>
<svg style="left:473.00px;top:28.20px;width:8px;height:8px;" viewBox="0 0 16 16"><path d="M3 3h10M5 5.500h8v8H5zM3 3v8" fill="none" stroke="#b0b6c4" stroke-width="1.400"/></svg>
<div style="left:484.20px;top:27.60px;width:0.60px;height:9.20px;background:#a6adc0;"></div>
<div style="left:487.00px;top:26.60px;width:10.70px;height:11.00px;background:#fdfdfe;box-shadow:inset 0 0 0 0.6px #5a7fbf;"></div>
<svg style="left:488.65px;top:28.45px;width:7.5px;height:7.5px;" viewBox="0 0 16 16"><circle cx="11" cy="8" r="2.600" fill="none" stroke="#222" stroke-width="1.800"/><path d="M2 8h7M3.500 8v2.500M6 8v2" stroke="#222" stroke-width="1.700"/></svg>
<div style="left:499.70px;top:27.60px;width:0.60px;height:9.20px;background:#a6adc0;"></div>
<svg style="left:502.50px;top:28.20px;width:8px;height:8px;" viewBox="0 0 16 16"><rect x="2" y="7" width="6" height="6.500" fill="#555"/><rect x="9" y="2" width="5.500" height="5" fill="#fff" stroke="#333" stroke-width="1.200"/><path d="M8 10h3V7.500" fill="none" stroke="#333" stroke-width="1.200"/><path d="M2.500 2.500h4M4.500 0.500v4" stroke="#2aa33a" stroke-width="1.700"/></svg>
<svg style="left:513.00px;top:28.20px;width:8px;height:8px;" viewBox="0 0 16 16"><rect x="6" y="2" width="7" height="10" fill="#eee" stroke="#777" stroke-width="1.200"/><rect x="3" y="5" width="6" height="9" fill="#ddd" stroke="#777" stroke-width="1.200"/></svg>
<svg style="left:523.00px;top:28.20px;width:8px;height:8px;" viewBox="0 0 16 16"><rect x="2" y="4" width="12" height="8" fill="none" stroke="#b3b9c6" stroke-width="1.300"/><path d="M2 8h12" stroke="#b3b9c6" stroke-width="1.100"/></svg>
<svg style="left:533.70px;top:28.20px;width:8px;height:8px;" viewBox="0 0 16 16"><path d="M4 2h6l3 3v9H4z" fill="#f4f4f4" stroke="#666" stroke-width="1.200"/><path d="M3 9a4 4 0 0 0 6 3" fill="none" stroke="#333" stroke-width="1.600"/></svg>
<svg style="left:544.00px;top:28.20px;width:8px;height:8px;" viewBox="0 0 16 16"><rect x="2" y="2.500" width="12" height="11" fill="#444"/><path d="M2 6h12M2 9.500h12" stroke="#ddd" stroke-width="0.900"/><rect x="2" y="2.500" width="12" height="2.600" fill="#222"/></svg>
<svg style="left:554.00px;top:28.20px;width:8px;height:8px;" viewBox="0 0 16 16"><rect x="1.500" y="1.500" width="13" height="13" fill="#e8b730"/><rect x="1.500" y="1.500" width="4" height="13" fill="#222"/><rect x="7" y="7" width="3" height="7.500" fill="#2a6fc0"/><rect x="10.500" y="4" width="3" height="10.500" fill="#d0452a"/></svg>
<svg style="left:565.00px;top:33.20px;width:4px;height:4px;" viewBox="0 0 16 16"><path d="M3 3h10v1.600H3zM3 7h10L8 12.500z" fill="#1e1e1e"/></svg>
<div style="left:5.4px;top:40.1px;width:2.4px;height:9px;background:repeating-linear-gradient(#b3bacb 0 0.8px,#d0d5e3 0.8px 1.6px);opacity:0.8"></div>
<svg style="left:10.25px;top:40.85px;width:7.5px;height:7.5px;" viewBox="0 0 16 16"><path d="M6 1v4.500M10 1v4.500" stroke="#979eaf" stroke-width="1.500"/><path d="M4.500 5h7v4c0 1.500-1.300 2.300-2.600 2.500V15.500H7.100v-4C5.800 11.300 4.500 10.500 4.500 9z" fill="#979eaf"/></svg>
<svg style="left:21.25px;top:40.85px;width:7.5px;height:7.5px;" viewBox="0 0 16 16"><path d="M3 2l3 4M13 2l-3 4M8 1v5" stroke="#979eaf" stroke-width="1.500"/><path d="M5.500 6h5v3L8 11.500 5.500 9zM8 11v4" fill="#979eaf" stroke="#979eaf" stroke-width="1"/></svg>
<div style="left:31.70px;top:40.00px;width:0.60px;height:9.20px;background:#a6adc0;"></div>
<div style="left:35.00px;top:39.90px;width:74.00px;height:9.40px;background:#e9ecf4;box-shadow:0 0 0 0.5px #c4cad9;"></div>
<span id="t68" style="top:43.00px;font-size:5.8px;color:#a3a8b5;letter-spacing:-0.149px;left:37.00px;">CountriesDb</span>
<svg style="left:104.20px;top:43.00px;width:3.6px;height:3.6px;" viewBox="0 0 16 16"><path d="M3 6h10L8 11z" fill="#8d93a3"/></svg>
<div style="left:112.20px;top:40.00px;width:0.60px;height:9.20px;background:#a6adc0;"></div>
<svg style="left:116.00px;top:41.10px;width:7px;height:7px;" viewBox="0 0 16 16"><path d="M5 3l7 5-7 5z" fill="none" stroke="#979eaf" stroke-width="1.500"/></svg>
<span id="t69" style="top:43.00px;font-size:5.8px;color:#8f95a4;letter-spacing:-0.422px;left:125.70px;">Execute</span>
<div style="left:151.10px;top:42.70px;width:3.80px;height:3.80px;background:#979eaf;"></div>
<svg style="left:159.95px;top:40.85px;width:7.5px;height:7.5px;" viewBox="0 0 16 16"><path d="M3 8.500l3.500 4L13 3.500" fill="none" stroke="#979eaf" stroke-width="2.200"/></svg>
<svg style="left:169.70px;top:40.60px;width:8px;height:8px;" viewBox="0 0 16 16"><rect x="2" y="2" width="5" height="4" fill="none" stroke="#979eaf" stroke-width="1.300"/><rect x="9" y="9" width="5" height="4.500" fill="none" stroke="#979eaf" stroke-width="1.300"/><path d="M4.500 6v5h4.500" fill="none" stroke="#979eaf" stroke-width="1.300"/></svg>
<svg style="left:181.00px;top:40.60px;width:8px;height:8px;" viewBox="0 0 16 16"><rect x="2" y="3" width="12" height="10.500" fill="none" stroke="#979eaf" stroke-width="1.300"/><path d="M2 6.500h12M2 10h12M6 3v10.500M10 3v10.500" stroke="#979eaf" stroke-width="1"/></svg>
<svg style="left:191.70px;top:40.60px;width:8px;height:8px;" viewBox="0 0 16 16"><rect x="2" y="3" width="12" height="10.500" fill="none" stroke="#979eaf" stroke-width="1.300"/><path d="M2 6.500h12M2 10h12M6 3v10.500M10 3v10.500" stroke="#979eaf" stroke-width="1"/></svg>
<div style="left:201.70px;top:40.00px;width:0.60px;height:9.20px;background:#a6adc0;"></div>
<svg style="left:205.50px;top:40.60px;width:8px;height:8px;" viewBox="0 0 16 16"><rect x="2" y="2" width="5" height="4" fill="none" stroke="#979eaf" stroke-width="1.300"/><rect x="9" y="9" width="5" height="4.500" fill="none" stroke="#979eaf" stroke-width="1.300"/><path d="M4.500 6v5h4.500" fill="none" stroke="#979eaf" stroke-width="1.300"/></svg>
<svg style="left:215.50px;top:40.60px;width:8px;height:8px;" viewBox="0 0 16 16"><rect x="2" y="2" width="5" height="4" fill="none" stroke="#979eaf" stroke-width="1.300"/><rect x="9" y="9" width="5" height="4.500" fill="none" stroke="#979eaf" stroke-width="1.300"/><path d="M4.500 6v5h4.500" fill="none" stroke="#979eaf" stroke-width="1.300"/></svg>
<svg style="left:226.00px;top:40.60px;width:8px;height:8px;" viewBox="0 0 16 16"><rect x="2" y="3" width="12" height="10.500" fill="none" stroke="#979eaf" stroke-width="1.300"/><path d="M2 6.500h12M2 10h12M6 3v10.500M10 3v10.500" stroke="#979eaf" stroke-width="1"/></svg>
<div style="left:237.20px;top:40.00px;width:0.60px;height:9.20px;background:#a6adc0;"></div>
<svg style="left:241.00px;top:40.60px;width:8px;height:8px;" viewBox="0 0 16 16"><rect x="2" y="3" width="12" height="10.500" fill="none" stroke="#979eaf" stroke-width="1.300"/><path d="M2 6.500h12M2 10h12M6 3v10.500M10 3v10.500" stroke="#979eaf" stroke-width="1"/></svg>
<svg style="left:251.00px;top:40.60px;width:8px;height:8px;" viewBox="0 0 16 16"><rect x="2" y="3" width="12" height="10.500" fill="none" stroke="#979eaf" stroke-width="1.300"/><path d="M2 6.500h12M2 10h12M6 3v10.500M10 3v10.500" stroke="#979eaf" stroke-width="1"/></svg>
<svg style="left:261.70px;top:40.60px;width:8px;height:8px;" viewBox="0 0 16 16"><rect x="2" y="2" width="5" height="4" fill="none" stroke="#979eaf" stroke-width="1.300"/><rect x="9" y="9" width="5" height="4.500" fill="none" stroke="#979eaf" stroke-width="1.300"/><path d="M4.500 6v5h4.500" fill="none" stroke="#979eaf" stroke-width="1.300"/></svg>
<div style="left:272.20px;top:40.00px;width:0.60px;height:9.20px;background:#a6adc0;"></div>
<svg style="left:276.00px;top:40.60px;width:8px;height:8px;" viewBox="0 0 16 16"><path d="M3 4h10M6 7h7M6 10h7M3 13h10" stroke="#979eaf" stroke-width="1.300"/></svg>
<svg style="left:285.50px;top:40.60px;width:8px;height:8px;" viewBox="0 0 16 16"><path d="M3 4h10M6 7h7M6 10h7M3 13h10" stroke="#979eaf" stroke-width="1.300"/></svg>
<div style="left:296.20px;top:40.00px;width:0.60px;height:9.20px;background:#a6adc0;"></div>
<svg style="left:301.00px;top:40.60px;width:8px;height:8px;" viewBox="0 0 16 16"><path d="M3 4h10M3 12h10M5 8h6" stroke="#979eaf" stroke-width="1.300"/><path d="M8 2v12" stroke="#979eaf" stroke-width="1"/></svg>
<svg style="left:311.00px;top:40.60px;width:8px;height:8px;" viewBox="0 0 16 16"><path d="M3 4h10M3 12h10M5 8h6" stroke="#979eaf" stroke-width="1.300"/><path d="M8 2v12" stroke="#979eaf" stroke-width="1"/></svg>
<div style="left:321.70px;top:40.00px;width:0.60px;height:9.20px;background:#a6adc0;"></div>
<svg style="left:325.50px;top:40.60px;width:8px;height:8px;" viewBox="0 0 16 16"><path d="M2 6h8M2 10h6" stroke="#979eaf" stroke-width="1.300"/><circle cx="11" cy="9" r="2.800" fill="none" stroke="#979eaf" stroke-width="1.300"/></svg>
<svg style="left:336.00px;top:45.20px;width:4px;height:4px;" viewBox="0 0 16 16"><path d="M3 3h10v1.600H3zM3 7h10L8 12.500z" fill="#1e1e1e"/></svg>
<svg style="left:6.70px;top:499.20px;width:8px;height:8px;" viewBox="0 0 16 16"><path d="M1.500 3.300l5.500-0.800v5H1.500zM8 2.300l6.500-1v6.200H8zM1.500 8.500H7v5l-5.500-0.800zM8 8.500h6.500v6.200l-6.500-1z" fill="#ffffff"/></svg>
<div style="left:22.50px;top:494.00px;width:158.40px;height:18.00px;background:#eeeeee;"></div>
<svg style="left:26.70px;top:499.00px;width:9px;height:9px;" viewBox="0 0 16 16"><circle cx="10" cy="6" r="4" fill="none" stroke="#222" stroke-width="1.300"/><path d="M7 9L2 14" stroke="#222" stroke-width="1.500"/></svg>
<span id="t70" style="top:501.00px;font-size:6.3px;color:#3a3a3a;letter-spacing:0.255px;left:41.00px;">Type here to search</span>
<svg style="left:187.75px;top:498.65px;width:8.7px;height:8.7px;" viewBox="0 0 16 16"><circle cx="8" cy="8" r="5.700" fill="none" stroke="#fff" stroke-width="1.900"/></svg>
<svg style="left:208.75px;top:497.55px;width:10.5px;height:10.5px;" viewBox="0 0 16 16"><rect x="4.500" y="4" width="7" height="8.500" fill="none" stroke="#c5cfe2" stroke-width="1.300"/><path d="M2 3v10.500M14 3v10.500" stroke="#c5cfe2" stroke-width="1.300"/><path d="M4.500 8.200h7" stroke="#c5cfe2" stroke-width="0.800" opacity="0.6"/></svg>
<svg style="left:232.10px;top:497.20px;width:12px;height:12px;" viewBox="0 0 16 16"><defs><linearGradient id="eg" x1="0" y1="1" x2="1" y2="0"><stop offset="0" stop-color="#0d5fc4"/><stop offset="0.500" stop-color="#1f9bdc"/><stop offset="1" stop-color="#4bd06a"/></linearGradient></defs><circle cx="8" cy="8" r="7.600" fill="url(#eg)"/><path d="M6.200 9.200c0-2.200 2-3.600 4.200-3.200 2 0.400 3.400 1.800 3.600 3.600 0.100 1-0.600 1.900-1.900 2.100-1.500 0.300-2.600-0.200-3.200-0.900-0.500 1.500 0.800 3 3 3.200-3 1-6-1.200-5.700-4.800z" fill="#0b3f8f" opacity="0.850"/><ellipse cx="11" cy="9.300" rx="2.600" ry="2" fill="#1d2a3f"/><path d="M1.200 6.500C2.500 2 8.500 0.500 12.500 3c-4-0.800-8 0.200-9 5.500-0.400 2 0.200 4 1.500 5.500-2.800-1.300-4.600-4.300-3.800-7.500z" fill="#1b8fe6" opacity="0.550"/></svg>
<svg style="left:255.25px;top:497.25px;width:11.5px;height:11.5px;" viewBox="0 0 16 16"><path d="M1 2.800h5.200l1.300 1.700H15v9H1z" fill="#e9a920"/><path d="M1 5.800h14v7.800H1z" fill="#fbd65c"/><rect x="4.200" y="9" width="7.600" height="4.600" fill="#3b93e4"/><rect x="6" y="10.700" width="4" height="2.900" fill="#fbd65c"/></svg>
<svg style="left:278.40px;top:496.90px;width:12px;height:12px;" viewBox="0 0 16 16"><path d="M5.200 5.500V3.800a2.800 2.800 0 0 1 5.600 0v1.700" fill="none" stroke="#f2f2f2" stroke-width="1.200"/><path d="M0.800 5h14.400v10H0.800z" fill="#f6f6f6"/><rect x="5.400" y="7.300" width="2.400" height="2.400" fill="#f0502c"/><rect x="8.300" y="7.300" width="2.400" height="2.400" fill="#7dba2f"/><rect x="5.400" y="10.200" width="2.400" height="2.400" fill="#2f96e6"/><rect x="8.300" y="10.200" width="2.400" height="2.400" fill="#f7b91e"/></svg>
<svg style="left:301.40px;top:496.80px;width:11.8px;height:11.8px;" viewBox="0 0 16 16"><path d="M0.500 6.200L8 0.800l7.500 5.400v8.600h-15z" fill="#1173cf"/><path d="M0.500 6.200l7.500 5.200 7.500-5.200v8.600h-15z" fill="#2fa5f4"/><path d="M0.500 6.200L8 11.400l7.500-5.200v1.600L8 13 0.500 7.800z" fill="#d8effd"/><path d="M0.500 14.800L8 9.800l7.500 5z" fill="#45b6fa"/></svg>
<svg style="left:324.30px;top:497.10px;width:11.8px;height:11.8px;" viewBox="0 0 16 16"><rect x="4.500" y="0.800" width="11" height="14.400" rx="1" fill="#2b7cd3"/><rect x="4.500" y="4.400" width="11" height="3.600" fill="#2266c4"/><rect x="4.500" y="8" width="11" height="3.600" fill="#185abd"/><rect x="4.500" y="11.600" width="11" height="3.600" rx="1" fill="#103f91"/><rect x="0.500" y="3.600" width="8.800" height="8.800" rx="0.900" fill="#1450a8"/></svg>
<span id="t71" style="top:502.00px;font-size:4.8px;color:#fff;letter-spacing:0.000px;font-weight:700;left:325.90px;">W</span>
<div style="left:321.20px;top:510.80px;width:18.80px;height:1.20px;background:#a9bfe8;"></div>
<svg style="left:347.50px;top:497.10px;width:11.8px;height:11.8px;" viewBox="0 0 16 16"><rect x="4.500" y="0.800" width="11" height="14.400" rx="1" fill="#21a366"/><rect x="4.500" y="4.400" width="5.500" height="3.600" fill="#107c41"/><rect x="10" y="4.400" width="5.500" height="3.600" fill="#21a366"/><rect x="4.500" y="8" width="11" height="7.200" rx="1" fill="#107c41"/><rect x="10" y="8" width="5.500" height="3.600" fill="#185c37" opacity="0.500"/><rect x="0.500" y="3.600" width="8.800" height="8.800" rx="0.900" fill="#0e6b38"/></svg>
<span id="t72" style="top:502.00px;font-size:4.8px;color:#fff;letter-spacing:0.000px;font-weight:700;left:349.60px;">X</span>
<svg style="left:370.70px;top:497.10px;width:11.8px;height:11.8px;" viewBox="0 0 16 16"><circle cx="9" cy="8" r="7.200" fill="#ed6c47"/><path d="M9 0.800a7.200 7.200 0 0 1 7.200 7.200H9z" fill="#ff8f6b"/><path d="M1.800 8h14.400a7.200 7.200 0 0 1-14.400 0z" fill="#d35230"/><rect x="0.500" y="3.600" width="8.800" height="8.800" rx="0.900" fill="#c43e1c"/></svg>
<span id="t73" style="top:502.00px;font-size:4.8px;color:#fff;letter-spacing:0.000px;font-weight:700;left:372.90px;">P</span>
<svg style="left:393.90px;top:497.10px;width:11.8px;height:11.8px;" viewBox="0 0 16 16"><rect x="5" y="1.200" width="10.500" height="13.600" rx="1" fill="#1490df"/><rect x="5" y="8" width="10.500" height="6.800" fill="#0f6cbd"/><rect x="10.200" y="1.200" width="5.300" height="6.800" fill="#50c0f6"/><rect x="0.500" y="3.600" width="8.800" height="8.800" rx="0.900" fill="#0a5fb4"/></svg>
<span id="t74" style="top:502.00px;font-size:4.8px;color:#fff;letter-spacing:0.000px;font-weight:700;left:395.90px;">O</span>
<svg style="left:417.30px;top:497.70px;width:10.6px;height:10.6px;" viewBox="0 0 16 16"><rect x="0.500" y="0.500" width="15" height="15" rx="3.800" fill="#e8353b"/><circle cx="8" cy="8" r="5.300" fill="#fff"/><path d="M4.800 5.500l3.200 6 3.200-6" fill="none" stroke="#e8353b" stroke-width="2.300"/></svg>
<svg style="left:439.80px;top:497.20px;width:11.6px;height:11.6px;" viewBox="0 0 16 16"><path d="M11.800 0.500l3.700 1.600v11.800l-3.700 1.600L4 9.200l-2 1.900L0.500 10.300V5.700L2 4.900l2 1.900z" fill="#8a5ce0"/><path d="M11.800 4.600L7.300 8l4.500 3.400z" fill="#1d2a3f"/><path d="M11.800 0.500l3.700 1.600v11.800l-3.700 1.600z" fill="#a77ff0"/></svg>
<svg style="left:463.50px;top:497.60px;width:10.8px;height:10.8px;" viewBox="0 0 16 16"><circle cx="8" cy="8" r="7.600" fill="#2ea6f2"/><path d="M6.300 13V4.600h3a2.400 2.400 0 0 1 0 4.800H6.300M3.800 6.200h3.400" fill="none" stroke="#fff" stroke-width="1.500"/></svg>
<svg style="left:486.30px;top:497.10px;width:11.8px;height:11.8px;" viewBox="0 0 16 16"><circle cx="12" cy="3.600" r="2.200" fill="#7b83eb"/><rect x="8" y="6.300" width="7.500" height="7" rx="1.600" fill="#5059c9"/><circle cx="7" cy="3.200" r="2.700" fill="#7b83eb"/><rect x="2.800" y="6.300" width="8.600" height="8.700" rx="1.600" fill="#7b83eb"/><rect x="0.500" y="4.600" width="7.600" height="7.600" rx="0.900" fill="#4b53bc"/><circle cx="13.200" cy="13.200" r="2.600" fill="#f5c400"/></svg>
<svg style="left:509.40px;top:497.40px;width:11.2px;height:11.2px;" viewBox="0 0 16 16"><rect x="2.500" y="0.800" width="8.500" height="10" fill="#f6c833"/><path d="M0.800 4.800v-4h4M15.200 4.800v-4h-4M0.800 11.200v4h4M15.200 11.200v4h-4" stroke="#4a9a3c" stroke-width="1.600" fill="none"/><path d="M8 8l6 6.500M14 8l-6 6.500" stroke="#2b86d8" stroke-width="1.700"/></svg>
<svg style="left:532.40px;top:497.40px;width:11.2px;height:11.2px;" viewBox="0 0 16 16"><circle cx="8" cy="8" r="7" fill="#0c1322" stroke="#f6f6f6" stroke-width="1.500"/><rect x="4.800" y="7.300" width="6.400" height="5" fill="#f6f6f6"/><path d="M5.900 7.300v-2a2.100 2.100 0 0 1 4.200 0v2" fill="none" stroke="#f6f6f6" stroke-width="1.300"/></svg>
<div style="left:413.10px;top:510.80px;width:18.80px;height:1.20px;background:#9aa8c4;"></div>
<div style="left:436.10px;top:510.80px;width:18.80px;height:1.20px;background:#9aa8c4;"></div>
<div style="left:459.10px;top:510.80px;width:18.80px;height:1.20px;background:#9aa8c4;"></div>
<div style="left:482.10px;top:510.80px;width:18.80px;height:1.20px;background:#9aa8c4;"></div>
<div style="left:505.10px;top:510.80px;width:18.80px;height:1.20px;background:#9aa8c4;"></div>
<div style="left:528.10px;top:510.80px;width:18.80px;height:1.20px;background:#9aa8c4;"></div>
<div style="left:551.00px;top:500.40px;width:20.50px;height:9.40px;background:#56637a;"></div>
<div style="left:551.00px;top:509.80px;width:20.50px;height:2.20px;background:#b4c6ea;"></div>
<svg style="left:555.40px;top:497.30px;width:11.2px;height:11.2px;" viewBox="0 0 16 16"><rect x="0.800" y="0.800" width="14.400" height="14.400" rx="1.200" fill="#f3b52a"/><rect x="2.600" y="2.600" width="10.800" height="10.800" fill="#f8cf55"/><path d="M4 4l7 4.500L4 13" fill="none" stroke="#d9901a" stroke-width="1.700"/><path d="M12.500 4v9" stroke="#f3e2a0" stroke-width="1.400"/></svg>
<svg style="left:588.50px;top:499.70px;width:7px;height:7px;" viewBox="0 0 16 16"><path d="M3 10.500l5-5 5 5" fill="none" stroke="#fff" stroke-width="1.500"/></svg>
<svg style="left:602.20px;top:499.00px;width:9px;height:9px;" viewBox="0 0 16 16"><path d="M4 12.500a3 3 0 0 1 0.300-6 4 4 0 0 1 7.500 0.800 2.700 2.700 0 0 1 0.200 5.200z" fill="#1a86e0"/></svg>
<svg style="left:617.40px;top:499.00px;width:9px;height:9px;" viewBox="0 0 16 16"><path d="M4 12.500a3 3 0 0 1 0.300-6 4 4 0 0 1 7.500 0.800 2.700 2.700 0 0 1 0.200 5.200z" fill="#f4f4f4"/></svg>
<svg style="left:632.40px;top:499.20px;width:8px;height:8px;" viewBox="0 0 16 16"><rect x="3" y="4.500" width="11" height="7" fill="#f4f4f4"/><rect x="1.500" y="6.500" width="1.500" height="3" fill="#f4f4f4"/><path d="M2 3l3 2" stroke="#f4f4f4" stroke-width="1.200"/></svg>
<svg style="left:647.30px;top:499.20px;width:8px;height:8px;" viewBox="0 0 16 16"><path d="M2.500 13.500a11 11 0 0 1 11-11M6 13.500a7.500 7.500 0 0 1 7.500-7.500M9.500 13.500a4 4 0 0 1 4-4" fill="none" stroke="#8e99ad" stroke-width="1.200"/><path d="M13.500 13.500v-1.500h-1.500v1.500z" fill="#8e99ad"/></svg>
<svg style="left:662.25px;top:498.95px;width:8.5px;height:8.5px;" viewBox="0 0 16 16"><path d="M4.500 2L8 4.200 4.500 6.400 1 4.200zM11.500 2L15 4.200l-3.500 2.200L8 4.200zM4.500 6.400L8 8.600 4.500 10.800 1 8.600zM11.500 6.400L15 8.600l-3.500 2.200L8 8.600zM8 9.800l3.500 2.200L8 14.200 4.500 12z" fill="#f4f4f4"/></svg>
<svg style="left:678.00px;top:499.20px;width:8px;height:8px;" viewBox="0 0 16 16"><path d="M7 9.500a2.800 2.800 0 0 1 0-4l2-2a2.800 2.800 0 0 1 4 4l-1 1M9 6.500a2.800 2.800 0 0 1 0 4l-2 2a2.800 2.800 0 0 1-4-4l1-1" fill="none" stroke="#e6e6e6" stroke-width="1.500"/></svg>
<span id="t75" style="top:501.00px;font-size:5.4px;color:#ffffff;letter-spacing:-0.229px;left:600.00px;width:200px;text-align:center;">ENG</span>
<span id="t76" style="top:497.00px;font-size:5.4px;color:#ffffff;letter-spacing:-0.100px;left:626.30px;width:200px;text-align:center;">14:22</span>
<span id="t77" style="top:505.00px;font-size:5.4px;color:#ffffff;letter-spacing:0.202px;left:626.30px;width:200px;text-align:center;">17/10/2020</span>
<svg style="left:748.70px;top:498.50px;width:8.4px;height:8.4px;" viewBox="0 0 16 16"><path d="M1 1h14v11H7.500L4 15.500V12H1z" fill="#f6f6f6"/><path d="M4 4.500h7.500M4 7.500h5" stroke="#9aa6c0" stroke-width="1.200"/></svg>
<svg style="left:752.70px;top:502.70px;width:7.4px;height:7.4px;" viewBox="0 0 16 16"><circle cx="8" cy="8" r="6.800" fill="#1a1a1e" stroke="#8d93a0" stroke-width="1.400"/></svg>
<span id="t78" style="top:505.00px;font-size:4.4px;color:#fff;letter-spacing:0.000px;font-weight:700;left:755.50px;">1</span>
<div style="left:765.40px;top:494.00px;width:1.40px;height:18.00px;background:#3e4b6a;"></div>
</div>
</body></html>
